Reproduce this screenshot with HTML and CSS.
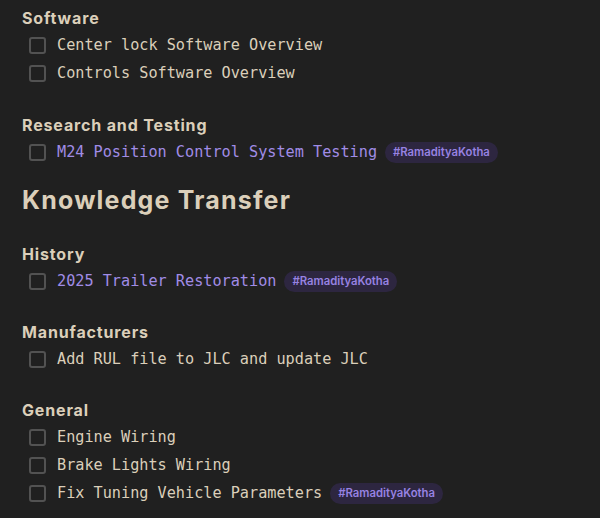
FILE: index.html
```html
<!DOCTYPE html>
<html>
<head>
<meta charset="utf-8">
<link rel="stylesheet" href="styles.css">
</head>
<body>
<div class="doc">
  <h4 class="h4 first">Software</h4>
  <ul class="tasks">
    <li class="task"><span class="cb"></span><span class="txt">Center lock Software Overview</span></li>
    <li class="task"><span class="cb"></span><span class="txt">Controls Software Overview</span></li>
  </ul>
  <h4 class="h4 research">Research and Testing</h4>
  <ul class="tasks">
    <li class="task"><span class="cb"></span><span class="txt link">M24 Position Control System Testing</span><span class="tag">#RamadityaKotha</span></li>
  </ul>
  <h2 class="h2">Knowledge Transfer</h2>
  <h4 class="h4">History</h4>
  <ul class="tasks">
    <li class="task"><span class="cb"></span><span class="txt link">2025 Trailer Restoration</span><span class="tag">#RamadityaKotha</span></li>
  </ul>
  <h4 class="h4">Manufacturers</h4>
  <ul class="tasks">
    <li class="task"><span class="cb"></span><span class="txt">Add RUL file to JLC and update JLC</span></li>
  </ul>
  <h4 class="h4">General</h4>
  <ul class="tasks">
    <li class="task"><span class="cb"></span><span class="txt">Engine Wiring</span></li>
    <li class="task"><span class="cb"></span><span class="txt">Brake Lights Wiring</span></li>
    <li class="task"><span class="cb"></span><span class="txt">Fix Tuning Vehicle Parameters</span><span class="tag">#RamadityaKotha</span></li>
  </ul>
</div>
</body>
</html>
```
FILE: styles.css
```css
html, body {
  margin: 0;
  padding: 0;
  background: #202020;
  height: 100%;
}
body {
  color: #dbcfba;
  font-family: "DejaVu Sans Mono", monospace;
  overflow: hidden;
}
.doc {
  padding: 0 22px;
  display: flex;
  flex-direction: column;
}
.h4 {
  margin: 25px 0 1px;
  font-family: Inter, "Liberation Sans", sans-serif;
  font-weight: 700;
  font-size: 16px;
  letter-spacing: 0.85px;
  line-height: 24px;
  color: #dbcfba;
}
.h4.first { margin-top: 6px; }
.h4.research { margin-top: 26px; }
.h2 {
  margin: 17px 0 0;
  font-family: Inter, "Liberation Sans", sans-serif;
  font-weight: 700;
  font-size: 25px;
  letter-spacing: 1.2px;
  line-height: 34px;
  color: #dbcfba;
}
.tasks {
  list-style: none;
  margin: 0;
  padding: 0 0 0 7px;
}
.task {
  height: 28px;
  display: flex;
  align-items: center;
}
.cb {
  width: 13px;
  height: 13px;
  border: 2px solid #525252;
  border-radius: 3px;
  flex: none;
  margin-right: 11px;
}
.txt {
  font-size: 15.2px;
  white-space: nowrap;
}
.link { color: #a08ce6; }
.tag {
  margin-left: 8px;
  padding: 0 8px;
  height: 21px;
  line-height: 21px;
  border-radius: 11px;
  background: #2d2640;
  color: #9782e2;
  font-family: Inter, "Liberation Sans", sans-serif;
  font-weight: 600;
  font-size: 11.3px;
}
```
